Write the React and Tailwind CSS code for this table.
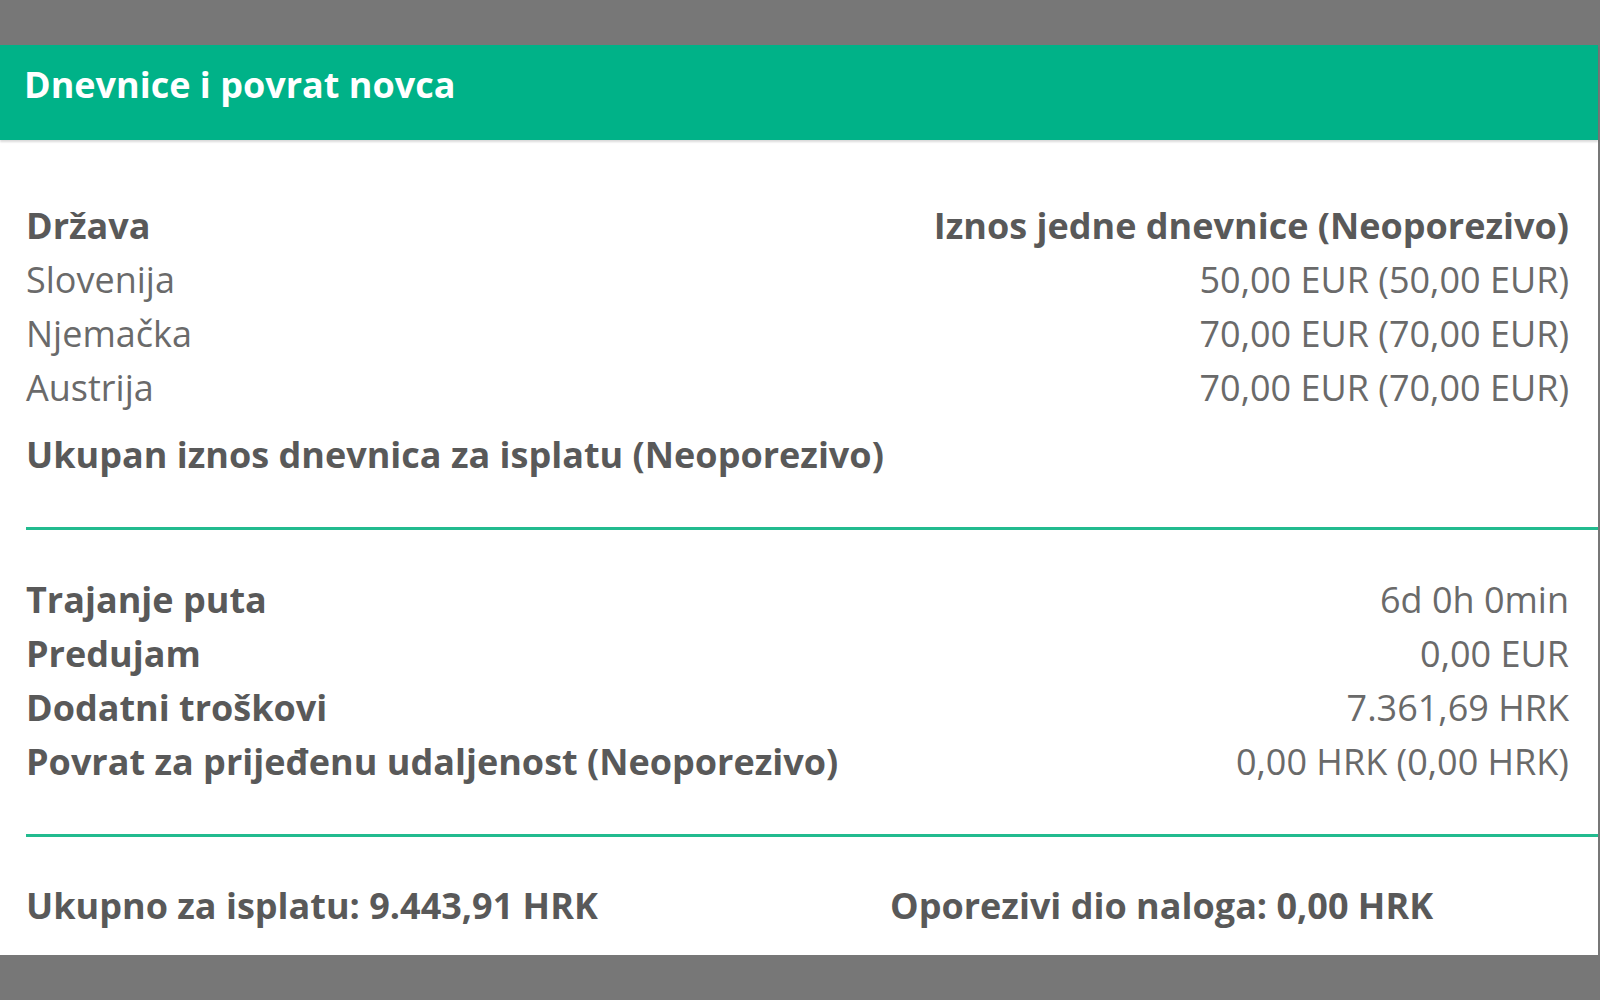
import React from 'react';

const countries = [
  { name: 'Slovenija', amount: '50,00 EUR (50,00 EUR)' },
  { name: 'Njemačka', amount: '70,00 EUR (70,00 EUR)' },
  { name: 'Austrija', amount: '70,00 EUR (70,00 EUR)' },
];

const summary = [
  { label: 'Trajanje puta', value: '6d 0h 0min' },
  { label: 'Predujam', value: '0,00 EUR' },
  { label: 'Dodatni troškovi', value: '7.361,69 HRK' },
  { label: 'Povrat za prijeđenu udaljenost (Neoporezivo)', value: '0,00 HRK (0,00 HRK)' },
];

function Row({ label, value, bold }) {
  return (
    <div className="flex items-center justify-between h-[54px] pr-[29px]">
      <span className={bold ? 'font-bold text-[#595959]' : 'text-[#6a6a6a]'}>{label}</span>
      <span className="text-[#6a6a6a]">{value}</span>
    </div>
  );
}

export default function App() {
  return (
    <div
      className="min-h-screen bg-[#777777] pt-[45px] pb-[44px] pr-[2px] text-[36px] leading-[54px]"
      style={{ fontFamily: '"Open Sans", "Liberation Sans", sans-serif' }}
    >
      <div className="bg-white">
        <div className="h-[95px] bg-[#00b288] pl-[24px] pt-[13px] shadow-[0_2px_2px_rgba(0,0,0,0.15)] relative">
          <h1 className="font-bold text-white">Dnevnice i povrat novca</h1>
        </div>

        <div className="pl-[26px] pt-[59px] pb-[22px]">
          <div className="flex items-center justify-between h-[54px] pr-[29px] font-bold text-[#595959]">
            <span>Država</span>
            <span>Iznos jedne dnevnice (Neoporezivo)</span>
          </div>
          {countries.map((c) => (
            <Row key={c.name} label={c.name} value={c.amount} />
          ))}
          <div className="mt-[13px] h-[54px] flex items-center font-bold text-[#595959]">
            Ukupan iznos dnevnica za isplatu (Neoporezivo)
          </div>

          <div className="mt-[45px] h-[3px] bg-[#22bb8f]" />

          <div className="mt-[43px]">
            {summary.map((s) => (
              <Row key={s.label} label={s.label} value={s.value} bold />
            ))}
          </div>

          <div className="mt-[45px] h-[3px] bg-[#22bb8f]" />

          <div className="mt-[42px] h-[54px] flex items-center font-bold text-[#595959]">
            <span className="w-[864px]">Ukupno za isplatu: 9.443,91 HRK</span>
            <span>Oporezivi dio naloga: 0,00 HRK</span>
          </div>
        </div>
      </div>
    </div>
  );
}
